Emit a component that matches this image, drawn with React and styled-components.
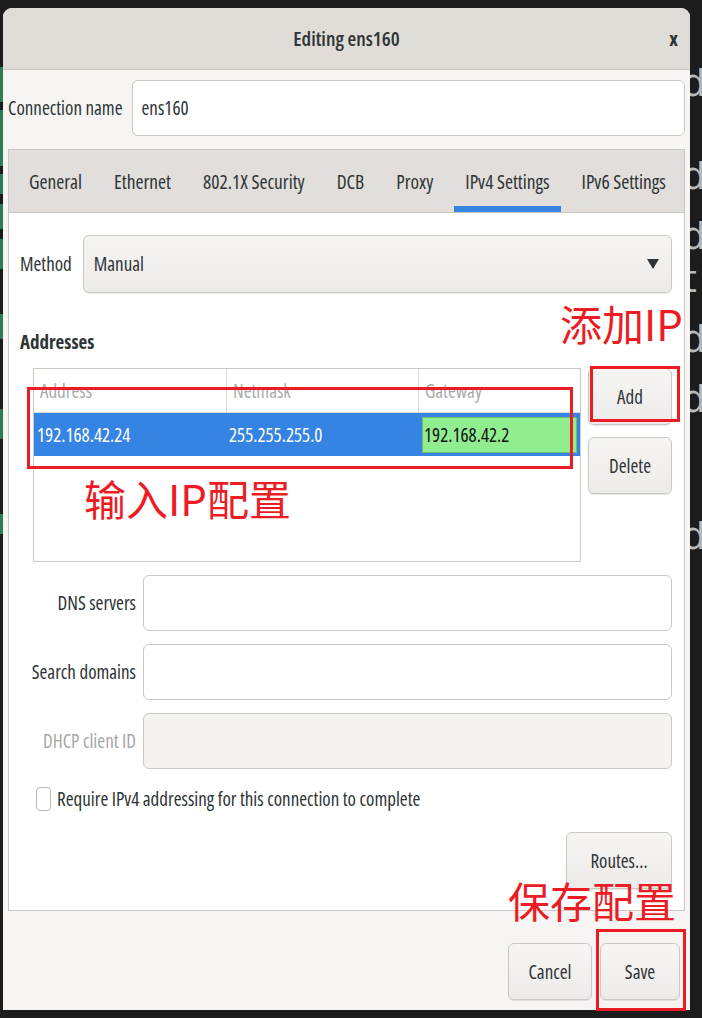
import React from 'react';
import styled, {createGlobalStyle} from 'styled-components';

const GlobalStyle = createGlobalStyle`
  html, body { margin: 0; padding: 0; background: #1c1c1c; }
  body { font-family: "Open Sans", "Noto Sans", sans-serif; font-stretch: 75%; }
  * { box-sizing: border-box; }
`;

const Desktop = styled.div`
  position: relative;
  width: 702px;
  height: 1018px;
  overflow: hidden;
  background: #1c1c1c;
`;

const Terminal = styled.div`
  display: flex;
  flex-direction: column;
  padding-left: 682px;
  color: #b9b9b9;
  font-family: "DejaVu Sans", sans-serif;
  font-stretch: normal;
  font-size: 38px;
  line-height: 32px;
`;

const TermLine = styled.div`
  margin-top: ${p => p.$gap}px;
  height: 32px;
`;

const GreenGutter = styled.div`
  position: absolute;
  left: 0;
  top: 0;
  display: flex;
  flex-direction: column;
  width: 3px;
`;

const GreenBit = styled.div`
  margin-top: ${p => p.$gap}px;
  height: ${p => p.$h}px;
  background: #2a7d55;
`;

const Window = styled.div`
  position: absolute;
  left: 3px;
  top: 8px;
  width: 687px;
  height: 1002px;
  background: #f6f5f4;
  border-radius: 9px 9px 0 0;
  display: flex;
  flex-direction: column;
  overflow: hidden;
  color: #2e3436;
`;

const TitleBar = styled.div`
  height: 62px;
  flex: none;
  display: flex;
  align-items: center;
  justify-content: center;
  position: relative;
  background: #dfdcd8;
  border-bottom: 1px solid #c9c4bf;
  font-size: 20px;
  font-weight: 600;
  color: #2e3436;
`;

const Close = styled.span`
  position: absolute;
  right: 12px;
  top: 17px;
  font-size: 20px;
  font-weight: bold;
`;

const Content = styled.div`
  flex: 1;
  display: flex;
  flex-direction: column;
  padding: 10px 5px 0 5px;
`;

const Row = styled.div`
  display: flex;
  align-items: center;
  gap: ${p => p.$gap || 8}px;
`;

const Label = styled.span`
  font-size: 19px;
  color: ${p => (p.$dim ? '#a5a8a6' : '#2e3436')};
  width: ${p => (p.$w ? p.$w + 'px' : 'auto')};
  text-align: ${p => (p.$right ? 'right' : 'left')};
  flex: none;
  white-space: nowrap;
`;

const Entry = styled.div`
  flex: 1;
  height: ${p => p.$h || 56}px;
  border: 1px solid #cdc7c2;
  border-radius: 6px;
  background: ${p => (p.$disabled ? '#f4f3f2' : '#ffffff')};
  display: flex;
  align-items: center;
  padding: 0 9px;
  font-size: 19px;
  color: #2e3436;
`;

const Notebook = styled.div`
  margin-top: 13px;
  height: 762px;
  border: 1px solid #cdc7c2;
  display: flex;
  flex-direction: column;
  background: #ffffff;
`;

const TabStrip = styled.div`
  height: 63px;
  flex: none;
  display: flex;
  align-items: stretch;
  gap: 10px;
  padding-left: 9px;
  background: #e1dedb;
  border-bottom: 1px solid #cdc7c2;
`;

const Tab = styled.div`
  display: flex;
  align-items: center;
  padding: 0 11px;
  font-size: 19.4px;
  white-space: nowrap;
  color: #2e3436;
  box-shadow: ${p => (p.$active ? 'inset 0 -6px 0 #3584e4' : 'none')};
`;

const Page = styled.div`
  flex: 1;
  display: flex;
  flex-direction: column;
  padding: 22px 12px 0 11px;
`;

const Combo = styled.div`
  flex: 1;
  height: 58px;
  border: 1px solid #cdc7c2;
  border-radius: 6px;
  background: linear-gradient(#f6f5f4, #edebe9);
  box-shadow: 0 1px 1px rgba(0, 0, 0, 0.08);
  display: flex;
  align-items: center;
  justify-content: space-between;
  padding: 0 12px 0 10px;
  font-size: 19px;
`;

const Arrow = styled.span`
  width: 0;
  height: 0;
  border-left: 6px solid transparent;
  border-right: 6px solid transparent;
  border-top: 10px solid #2e3436;
`;

const Heading = styled.div`
  margin-top: 36px;
  font-size: 19px;
  font-weight: bold;
`;

const AddrArea = styled.div`
  margin-top: 13px;
  display: flex;
  gap: 7px;
  padding-left: 13px;
`;

const Table = styled.div`
  width: 549px;
  height: 194px;
  border: 1px solid #cdc7c2;
  background: #fff;
  display: flex;
  flex-direction: column;
`;

const TRow = styled.div`
  display: grid;
  grid-template-columns: 192px 192px 1fr;
  height: ${p => p.$h}px;
  background: ${p => (p.$selected ? '#3584e4' : 'transparent')};
  color: ${p => (p.$selected ? '#ffffff' : '#a9abaa')};
  border-bottom: ${p => (p.$head ? '1px solid #dcd8d4' : 'none')};
`;

const Cell = styled.div`
  display: flex;
  align-items: center;
  padding-left: ${p => (p.$head ? 6 : 3)}px;
  font-size: 19px;
  border-left: ${p => (p.$sep ? '1px solid #dcd8d4' : 'none')};
`;

const EditCell = styled.div`
  margin: 4px 3px 3px 4px;
  display: flex;
  align-items: center;
  padding-left: 1px;
  background: #90ee90;
  border: 1px solid #6fbf6f;
  color: #111;
  font-size: 19px;
`;

const SideButtons = styled.div`
  display: flex;
  flex-direction: column;
  gap: 12px;
  width: 84px;
`;

const Button = styled.div`
  width: ${p => p.$w || 84}px;
  height: ${p => p.$h || 57}px;
  border: 1px solid #cdc7c2;
  border-radius: 6px;
  background: linear-gradient(#f6f5f4, #edebe9);
  box-shadow: 0 1px 1px rgba(0, 0, 0, 0.1);
  display: flex;
  align-items: center;
  justify-content: center;
  font-size: 19px;
  color: #2e3436;
  flex: none;
`;

const Fields = styled.div`
  margin-top: 13px;
  display: flex;
  flex-direction: column;
  gap: 13px;
`;

const CheckRow = styled.div`
  margin-top: 17px;
  display: flex;
  align-items: center;
  gap: 6px;
  padding-left: 16px;
  font-size: 19px;
`;

const Check = styled.span`
  width: 15px;
  height: 24px;
  border: 1px solid #bdb7b2;
  border-radius: 4px;
  background: #fff;
`;

const RoutesRow = styled.div`
  margin-top: 20px;
  display: flex;
  justify-content: flex-end;
`;

const Footer = styled.div`
  flex: 1;
  display: flex;
  justify-content: flex-end;
  align-items: flex-start;
  gap: 8px;
  padding: 32px 5px 0 0;
`;

const Mark = styled.div`
  position: absolute;
  left: ${p => p.$x}px;
  top: ${p => p.$y}px;
  width: ${p => p.$w}px;
  height: ${p => p.$h}px;
  border: 3px solid #ec1c24;
`;

const Note = styled.div`
  position: absolute;
  left: ${p => p.$x}px;
  top: ${p => p.$y}px;
  color: #ec1c24;
  font-family: "Noto Sans CJK SC", "Noto Sans", sans-serif;
  font-stretch: normal;
  font-size: 42px;
  line-height: 1;
  white-space: nowrap;
`;

const termLines = [
  {gap: 67, t: 'd'},
  {gap: 61, t: 'd'},
  {gap: 28, t: 'd'},
  {gap: 11, t: 't'},
  {gap: 28, t: 'd'},
  {gap: 28, t: 'd'},
  {gap: 105, t: 'd'},
];

const greens = [
  {gap: 67, h: 35},
  {gap: 8, h: 56},
  {gap: 8, h: 20},
  {gap: 10, h: 25},
  {gap: 10, h: 30},
  {gap: 45, h: 25},
  {gap: 70, h: 30},
  {gap: 75, h: 20},
];

export default function App() {
  return (
    <Desktop>
      <GlobalStyle />
      <Terminal>
        {termLines.map((l, i) => (
          <TermLine key={i} $gap={l.gap}>{l.t}</TermLine>
        ))}
      </Terminal>
      <GreenGutter>
        {greens.map((g, i) => (
          <GreenBit key={i} $gap={g.gap} $h={g.h} />
        ))}
      </GreenGutter>

      <Window>
        <TitleBar>
          Editing ens160
          <Close>x</Close>
        </TitleBar>
        <Content>
          <Row $gap={9}>
            <Label>Connection name</Label>
            <Entry>ens160</Entry>
          </Row>

          <Notebook>
            <TabStrip>
              <Tab>General</Tab>
              <Tab>Ethernet</Tab>
              <Tab>802.1X Security</Tab>
              <Tab>DCB</Tab>
              <Tab>Proxy</Tab>
              <Tab $active>IPv4 Settings</Tab>
              <Tab>IPv6 Settings</Tab>
            </TabStrip>
            <Page>
              <Row $gap={11}>
                <Label>Method</Label>
                <Combo>
                  Manual
                  <Arrow />
                </Combo>
              </Row>

              <Heading>Addresses</Heading>
              <AddrArea>
                <Table>
                  <TRow $h={44} $head>
                    <Cell $head>Address</Cell>
                    <Cell $head $sep>Netmask</Cell>
                    <Cell $head $sep>Gateway</Cell>
                  </TRow>
                  <TRow $h={43} $selected>
                    <Cell>192.168.42.24</Cell>
                    <Cell>255.255.255.0</Cell>
                    <EditCell>192.168.42.2</EditCell>
                  </TRow>
                </Table>
                <SideButtons>
                  <Button>Add</Button>
                  <Button>Delete</Button>
                </SideButtons>
              </AddrArea>

              <Fields>
                <Row $gap={7}>
                  <Label $w={116} $right>DNS servers</Label>
                  <Entry />
                </Row>
                <Row $gap={7}>
                  <Label $w={116} $right>Search domains</Label>
                  <Entry />
                </Row>
                <Row $gap={7}>
                  <Label $w={116} $right $dim>DHCP client ID</Label>
                  <Entry $disabled />
                </Row>
              </Fields>

              <CheckRow>
                <Check />
                Require IPv4 addressing for this connection to complete
              </CheckRow>

              <RoutesRow>
                <Button $w={106}>Routes...</Button>
              </RoutesRow>
            </Page>
          </Notebook>

          <Footer>
            <Button>Cancel</Button>
            <Button $w={80}>Save</Button>
          </Footer>
        </Content>
      </Window>

      <Note $x={560} $y={302}>添加IP</Note>
      <Mark $x={590} $y={366} $w={90} $h={56} />
      <Mark $x={27} $y={387} $w={546} $h={82} />
      <Note $x={84} $y={477}>输入IP配置</Note>
      <Note $x={508} $y={879}>保存配置</Note>
      <Mark $x={596} $y={929} $w={90} $h={82} />
    </Desktop>
  );
}
